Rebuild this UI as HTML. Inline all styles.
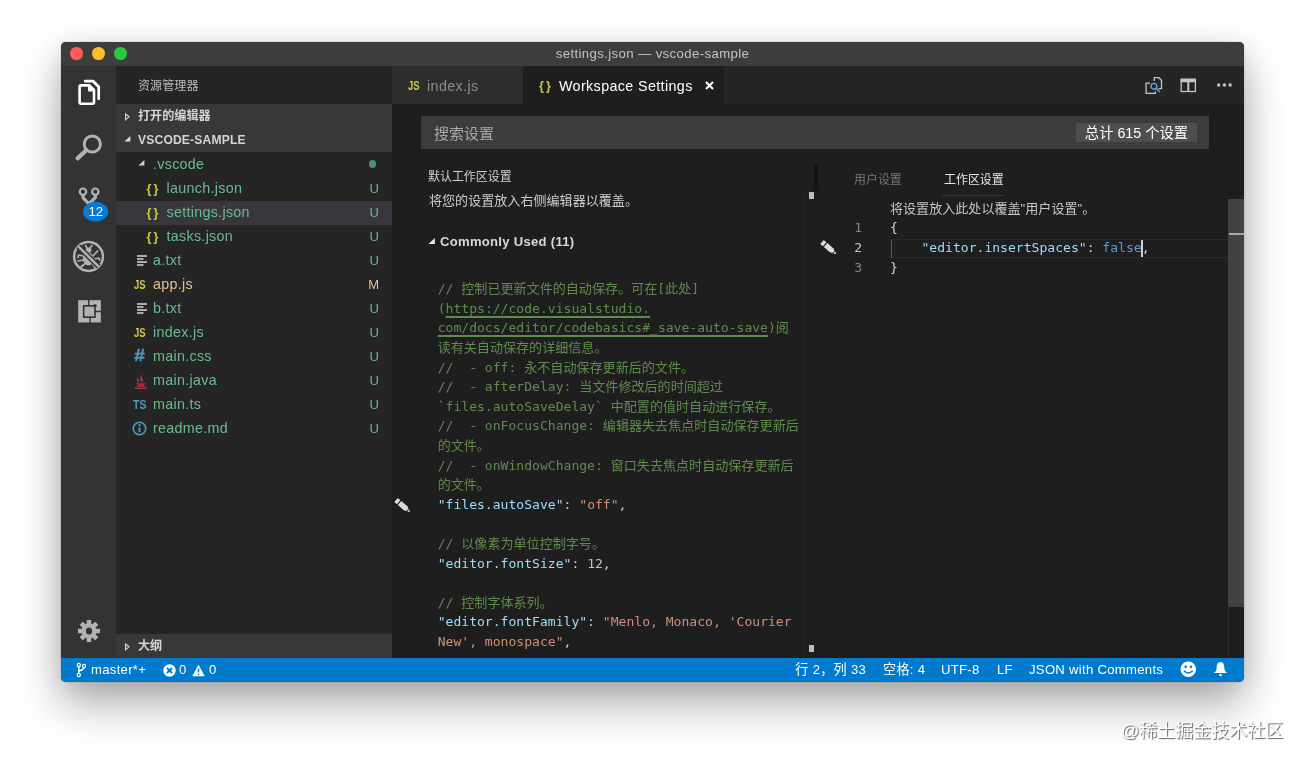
<!DOCTYPE html>
<html lang="zh-CN">
<head>
<meta charset="utf-8">
<title>settings.json — vscode-sample</title>
<style>
*{box-sizing:border-box;margin:0;padding:0}
html,body{width:1304px;height:762px;overflow:hidden;background:#fff}
body{position:relative;font-family:"Liberation Sans","Noto Sans CJK SC",sans-serif;font-size:14.3px;color:#ccc;-webkit-font-smoothing:antialiased}
.abs{position:absolute}
#win{position:absolute;left:61px;top:42px;width:1183px;height:640px;border-radius:5px;background:#1e1e1e;overflow:hidden;will-change:transform}
#shadow{position:absolute;left:61px;top:42px;width:1183px;height:640px;border-radius:5px;box-shadow:0 22px 44px rgba(0,0,0,.33),0 2px 26px rgba(0,0,0,.08),0 0 1px rgba(0,0,0,.5)}
#title{left:0;top:0;width:1183px;height:24px;background:#3d3d3d;text-align:center;line-height:24px;font-size:13.2px;color:#c4c4c4}
.tl{position:absolute;top:5px;width:12.8px;height:12.8px;border-radius:50%}
#act{left:0;top:24px;width:55px;height:592px;background:#333}
#side{left:55px;top:24px;width:276px;height:592px;background:#252526}
#status{left:0;top:615.6px;width:1183px;height:24.4px;background:#007acc;color:#fff;font-size:13.1px;line-height:24.4px}
#status .lt{letter-spacing:.3px}
#tabs{left:331px;top:24px;width:852px;height:37.8px;background:#252526}
.tab{position:absolute;top:0;height:37.8px;line-height:40px;font-size:14.3px}
.mono{font-family:"DejaVu Sans Mono","Liberation Mono","Noto Sans CJK SC",monospace;font-size:13.07px;line-height:19.61px;white-space:pre}
.row{position:absolute;left:0;width:276px;height:24px;line-height:23.2px;font-size:14.3px;white-space:nowrap}
.row .st{position:absolute;right:13px;top:0;font-size:13px}
.u{color:#6abb90}.m{color:#e2c08d}
.hdr{position:absolute;left:0;width:276px;height:24px;line-height:24px;background:#383838;font-weight:bold;font-size:12.1px;color:#d4d4d4}
.c{color:#608b4e}.k{color:#9cdcfe}.s{color:#ce9178}.n{color:#b5cea8}.b{color:#569cd6}.p{color:#d4d4d4}
.ico{position:absolute}
.lt{letter-spacing:.38px;white-space:nowrap}
.row .lt{letter-spacing:.3px}
.ln{height:19.61px}
.lk{text-decoration:underline;text-underline-offset:3.4px;text-decoration-thickness:1.6px}
.fi{position:absolute;top:0;line-height:24px}
.cd{font-weight:bold;font-size:12.2px;letter-spacing:0;display:inline-block;transform:scaleX(.78);transform-origin:0 50%}
</style>
</head>
<body>
<div id="shadow"></div>
<div id="win">
  <div id="title" class="abs lt">settings.json — vscode-sample
    <span class="tl" style="left:9px;background:#fc5b57"></span>
    <span class="tl" style="left:31px;background:#fdbc2e"></span>
    <span class="tl" style="left:53px;background:#28c840"></span>
  </div>
  <div id="act" class="abs">
    <!-- explorer -->
    <svg class="ico" style="left:14px;top:10px" width="30" height="34" viewBox="0 0 30 34">
      <path d="M10.2 5.2 H18.2 L23.7 10.7 V22.8" fill="none" stroke="#fff" stroke-width="2.7" stroke-linejoin="round" stroke-linecap="round"/>
      <path d="M18 4 L24.9 10.9 L22.4 11.2 L17.5 6.2 Z" fill="#fff"/>
      <path d="M6 9.4 H14.4 L19 14 V26.3 Q19 27.7 17.6 27.7 H6 Q4.6 27.7 4.6 26.3 V10.8 Q4.6 9.4 6 9.4 Z" fill="none" stroke="#fff" stroke-width="2.6" stroke-linejoin="round"/>
      <path d="M13.7 9.6 V14.8 H19" fill="#fff" stroke="#fff" stroke-width="1.2" stroke-linejoin="round"/>
    </svg>
    <!-- search -->
    <svg class="ico" style="left:10px;top:64px" width="36" height="36" viewBox="0 0 36 36">
      <circle cx="21.3" cy="14" r="8.1" fill="none" stroke="#b2b2b2" stroke-width="3"/>
      <path d="M15.2 20.3 L6.6 28.4" stroke="#b2b2b2" stroke-width="4.2" stroke-linecap="round"/>
    </svg>
    <!-- scm -->
    <svg class="ico" style="left:10px;top:112px" width="40" height="50" viewBox="0 0 40 50">
      <path d="M12 17 V19.6 L17.6 25.6 M24.3 17 V19.6 L18.8 25" fill="none" stroke="#b2b2b2" stroke-width="3.2" stroke-linejoin="round"/>
      <circle cx="12" cy="13.7" r="3.2" fill="#333" stroke="#b2b2b2" stroke-width="2.2"/>
      <circle cx="24.3" cy="13.7" r="3.2" fill="#333" stroke="#b2b2b2" stroke-width="2.2"/>
      <ellipse cx="24.6" cy="33.7" rx="12.6" ry="10" fill="#0a7ad0"/>
      <text x="24.8" y="38.4" text-anchor="middle" font-family="Liberation Sans, sans-serif" font-size="13.2" fill="#fff">12</text>
    </svg>
    <!-- debug -->
    <svg class="ico" style="left:9px;top:172px" width="38" height="38" viewBox="0 0 38 38">
      <circle cx="18.5" cy="18.5" r="14.4" fill="none" stroke="#b2b2b2" stroke-width="2.5"/>
      <ellipse cx="18.3" cy="21" rx="5.4" ry="6.4" fill="#b2b2b2"/>
      <ellipse cx="18.5" cy="12" rx="3" ry="2.6" fill="#b2b2b2"/>
      <path d="M13.5 18 L8.5 17 L8 19.5 M13 22 L8 23 M14.5 26 L11 29 M23.5 17.5 L27.5 13 M24 21 L29 20 L29.5 22 M22.5 26 L25 29.5 M17 10 L15.5 7.5 M20 10 L22 7.5" stroke="#b2b2b2" stroke-width="1.7" fill="none" stroke-linecap="round" stroke-linejoin="round"/>
      <path d="M8.3 8.3 L28.7 28.7" stroke="#333" stroke-width="5.4"/>
      <path d="M8.3 8.3 L28.7 28.7" stroke="#b2b2b2" stroke-width="2.5"/>
    </svg>
    <!-- extensions -->
    <svg class="ico" style="left:16.6px;top:234px" width="23.6" height="23.6" viewBox="0 0 25 25">
      <rect x="0.2" y="0.2" width="24" height="23.6" fill="#b4b4b4"/>
      <path d="M11.3 0 V7 M12.8 17.5 V24 M18 12.2 H24.5" stroke="#333" stroke-width="1.5" fill="none"/>
      <rect x="6" y="6.2" width="12" height="12" fill="#b0b0b0" stroke="#2a2a2a" stroke-width="1.6"/>
      <rect x="16.6" y="4.6" width="3" height="3.2" fill="#2a2a2a"/>
    </svg>
    <!-- gear -->
    <svg class="ico" style="left:15px;top:552px" width="26" height="26" viewBox="-13 -13 26 26">
      <g fill="#b2b2b2">
        <circle r="7.6"/>
        <g id="teeth">
          <rect x="-2.3" y="-11" width="4.6" height="22" rx="0.6"/>
          <rect x="-2.3" y="-11" width="4.6" height="22" rx="0.6" transform="rotate(45)"/>
          <rect x="-2.3" y="-11" width="4.6" height="22" rx="0.6" transform="rotate(90)"/>
          <rect x="-2.3" y="-11" width="4.6" height="22" rx="0.6" transform="rotate(135)"/>
        </g>
      </g>
      <ellipse rx="3.1" ry="3.5" fill="#333"/>
    </svg>
  </div>
  <div id="side" class="abs">
    <div class="abs" style="left:22px;top:1.3px;height:38.5px;line-height:38.5px;font-size:12.1px;color:#bbb">资源管理器</div>
    <div class="hdr" style="top:38px"><svg class="ico" style="left:8.5px;top:8.5px" width="6" height="8" viewBox="0 0 6 8"><path d="M0.6 0.8 L4 3.8 L0.6 6.8 Z" fill="none" stroke="#ddd" stroke-width="1.1"/></svg><span class="abs" style="left:22px">打开的编辑器</span></div>
    <div class="hdr" style="top:62px"><svg class="ico" style="left:8px;top:8px" width="7" height="6" viewBox="0 0 7 6"><path d="M6.4 0 V5.6 H0.4 Z" fill="#ddd"/></svg><span class="abs" style="left:22px;letter-spacing:.17px">VSCODE-SAMPLE</span></div>
    <div class="row" style="top:86.5px"><svg class="ico" style="left:22px;top:7.7px" width="7" height="6" viewBox="0 0 7 6"><path d="M6.4 0 V5.6 H0.4 Z" fill="#d0d0d0"/></svg><span class="abs lt u" style="left:37px">.vscode</span><span class="abs" style="left:252.8px;top:7.6px;width:7.6px;height:7.6px;border-radius:50%;background:#4f8f6e"></span></div>
    <div class="row" style="top:110.5px"><span class="fi" style="left:30.5px;color:#cbcb41;font-weight:bold;font-size:12.6px;letter-spacing:2.2px">{}</span><span class="abs lt u" style="left:50.5px">launch.json</span><span class="st u">U</span></div>
    <div class="row" style="top:134.5px;background:#37373d"><span class="fi" style="left:30.5px;color:#cbcb41;font-weight:bold;font-size:12.6px;letter-spacing:2.2px">{}</span><span class="abs lt u" style="left:50.5px">settings.json</span><span class="st u">U</span></div>
    <div class="row" style="top:158.5px"><span class="fi" style="left:30.5px;color:#cbcb41;font-weight:bold;font-size:12.6px;letter-spacing:2.2px">{}</span><span class="abs lt u" style="left:50.5px">tasks.json</span><span class="st u">U</span></div>
    <div class="row" style="top:182.5px"><svg class="ico" style="left:21px;top:6.5px" width="11" height="11" viewBox="0 0 11 11"><path d="M0 1 H10 M0 4 H6.5 M0 7 H10 M0 10 H6.5" stroke="#d4d7d6" stroke-width="1.5"/></svg><span class="abs lt u" style="left:37px">a.txt</span><span class="st u">U</span></div>
    <div class="row" style="top:206.5px"><span class="fi cd" style="left:17.5px;color:#cbcb41">JS</span><span class="abs lt m" style="left:37px">app.js</span><span class="st m">M</span></div>
    <div class="row" style="top:230.5px"><svg class="ico" style="left:21px;top:6.5px" width="11" height="11" viewBox="0 0 11 11"><path d="M0 1 H10 M0 4 H6.5 M0 7 H10 M0 10 H6.5" stroke="#d4d7d6" stroke-width="1.5"/></svg><span class="abs lt u" style="left:37px">b.txt</span><span class="st u">U</span></div>
    <div class="row" style="top:254.5px"><span class="fi cd" style="left:17.5px;color:#cbcb41">JS</span><span class="abs lt u" style="left:37px">index.js</span><span class="st u">U</span></div>
    <div class="row" style="top:278.5px"><span class="fi" style="left:18px;color:#519aba;font-weight:bold;font-style:italic;font-size:17px;top:-.3px;display:inline-block;transform:scaleX(1.12);transform-origin:0 50%;-webkit-text-stroke:.35px #519aba">#</span><span class="abs lt u" style="left:37px">main.css</span><span class="st u">U</span></div>
    <div class="row" style="top:302.5px"><svg class="ico" style="left:17.5px;top:3.5px" width="13.5" height="17" viewBox="0 0 13 17"><path d="M7.5 0.3 C10 3 4.5 5 6.3 7.8 C7 9 7.3 9.5 6.5 10.7 C9.8 8.7 9 7.3 7.9 6.3 C6.5 5 9.5 3.5 7.5 0.3 Z M5 2.5 C2.5 5 3.5 7 5 8.5 C5.2 9.5 5 10 4.6 10.6 C2 9 2 6 5 2.5 Z" fill="#b8363d"/><path d="M2 11.6 Q6.5 13 11 11.6 M2.8 13.7 Q6.5 14.8 10.2 13.7 M0.5 15.6 Q6.5 17.6 12.5 15.6" stroke="#b8363d" stroke-width="1.5" fill="none"/></svg><span class="abs lt u" style="left:37px">main.java</span><span class="st u">U</span></div>
    <div class="row" style="top:326.5px"><span class="fi cd" style="left:17px;color:#519aba;transform:scaleX(.86)">TS</span><span class="abs lt u" style="left:37px">main.ts</span><span class="st u">U</span></div>
    <div class="row" style="top:350.5px"><svg class="ico" style="left:16px;top:4.3px" width="15" height="15" viewBox="0 0 15 15"><circle cx="7.5" cy="7.5" r="6.2" fill="none" stroke="#519aba" stroke-width="1.6"/><path d="M7.5 6.4 V11.2" stroke="#519aba" stroke-width="2"/><circle cx="7.5" cy="4.1" r="1.2" fill="#519aba"/></svg><span class="abs lt u" style="left:37px">readme.md</span><span class="st u">U</span></div>
    <div class="hdr" style="top:568px"><svg class="ico" style="left:8.5px;top:8.5px" width="6" height="8" viewBox="0 0 6 8"><path d="M0.6 0.8 L4 3.8 L0.6 6.8 Z" fill="none" stroke="#ddd" stroke-width="1.1"/></svg><span class="abs" style="left:22px">大纲</span></div>
  </div>
  <div id="tabs" class="abs">
    <div class="tab" style="left:0;width:131px;background:#2d2d2d">
      <span class="abs cd" style="left:15.5px;color:#cbcb41">JS</span>
      <span class="abs lt" style="left:35px;color:#8e8e8e">index.js</span>
    </div>
    <div class="tab" style="left:131px;width:201px;background:#1e1e1e">
      <span class="abs lt" style="left:16px;color:#cbcb41;font-weight:bold;font-size:12.6px;letter-spacing:2.2px">{}</span>
      <span class="abs lt" style="left:36px;color:#fff">Workspace Settings</span>
      <svg class="ico" style="left:182px;top:15px" width="9" height="9" viewBox="0 0 9 9"><path d="M1 1 L8 8 M8 1 L1 8" stroke="#fff" stroke-width="2.1"/></svg>
    </div>
    <!-- editor actions -->
    <svg class="ico" style="left:753px;top:8.5px" width="19" height="20" viewBox="0 0 19 20">
      <path d="M9.3 6 V2.7 H14 L16.5 5.5 V13.7 H13.5 M5 8.2 H1.1 V18.3 H10.4 V16.5" fill="none" stroke="#c5c5c5" stroke-width="1.3"/>
      <circle cx="8.9" cy="11.3" r="2.9" fill="#252526" stroke="#5aa9e6" stroke-width="1.4"/>
      <path d="M11 13.4 L14.8 17" stroke="#5aa9e6" stroke-width="1.5"/>
    </svg>
    <svg class="ico" style="left:788.3px;top:12px" width="17" height="15" viewBox="0 0 17 15">
      <rect x="1.2" y="1.7" width="14.2" height="11.8" fill="none" stroke="#c5c5c5" stroke-width="1.3"/>
      <path d="M0.6 2.4 H16" stroke="#c5c5c5" stroke-width="3.6" fill="none"/><path d="M8.3 2 V13.5" stroke="#c5c5c5" stroke-width="2" fill="none"/>
    </svg>
    <svg class="ico" style="left:824px;top:16px" width="17" height="6" viewBox="0 0 17 6">
      <circle cx="2.7" cy="3" r="1.7" fill="#c5c5c5"/><circle cx="8.4" cy="3" r="1.7" fill="#c5c5c5"/><circle cx="14.1" cy="3" r="1.7" fill="#c5c5c5"/>
    </svg>
  </div>
  <div id="editor" class="abs" style="left:331px;top:62.5px;width:852px;height:553px">
    <!-- search box -->
    <div class="abs" style="left:29px;top:11.5px;width:788px;height:32.5px;background:#3c3c3c">
      <span class="abs" style="left:13px;top:1px;line-height:33px;font-size:15px;color:#a8a8a8">搜索设置</span>
      <span class="abs" style="left:655px;top:6.5px;width:121px;height:19.5px;background:#4e4e4e;color:#fff;line-height:20.5px;text-align:center;font-size:14.3px;white-space:nowrap">总计 615 个设置</span>
    </div>
    <!-- left pane -->
    <div class="abs" style="left:36px;top:62px;font-size:11.95px;line-height:20px;color:#d0d0d0">默认工作区设置</div>
    <div class="abs" style="left:37px;top:85.5px;font-size:13.07px;line-height:22px;color:#ccc">将您的设置放入右侧编辑器以覆盖。</div>
    <svg class="ico" style="left:36px;top:133.5px" width="7.5" height="6.5" viewBox="0 0 7 6"><path d="M6.4 0 V5.6 H0.4 Z" fill="#e8e8e8"/></svg>
    <div class="abs" style="left:48px;top:125.5px;font-size:13.07px;line-height:24px;font-weight:bold;letter-spacing:.29px;white-space:nowrap;color:#d8d8d8">Commonly Used (11)</div>
    <div class="abs mono" style="left:45.7px;top:174.6px"><div class="ln"><span class="c">// 控制已更新文件的自动保存。可在[此处]</span></div><div class="ln"><span class="c">(<span class="lk">https://code.visualstudio.</span></span></div><div class="ln"><span class="c"><span class="lk">com/docs/editor/codebasics#_save-auto-save</span>)阅</span></div><div class="ln"><span class="c">读有关自动保存的详细信息。</span></div><div class="ln"><span class="c">//  - off: 永不自动保存更新后的文件。</span></div><div class="ln"><span class="c">//  - afterDelay: 当文件修改后的时间超过</span></div><div class="ln"><span class="c">`files.autoSaveDelay` 中配置的值时自动进行保存。</span></div><div class="ln"><span class="c">//  - onFocusChange: 编辑器失去焦点时自动保存更新后</span></div><div class="ln"><span class="c">的文件。</span></div><div class="ln"><span class="c">//  - onWindowChange: 窗口失去焦点时自动保存更新后</span></div><div class="ln"><span class="c">的文件。</span></div><div class="ln"><span class="k">"files.autoSave"</span><span class="p">: </span><span class="s">"off"</span><span class="p">,</span></div><div class="ln">&nbsp;</div><div class="ln"><span class="c">// 以像素为单位控制字号。</span></div><div class="ln"><span class="k">"editor.fontSize"</span><span class="p">: </span><span class="n">12</span><span class="p">,</span></div><div class="ln">&nbsp;</div><div class="ln"><span class="c">// 控制字体系列。</span></div><div class="ln"><span class="k">"editor.fontFamily"</span><span class="p">: </span><span class="s">"Menlo, Monaco, 'Courier</span></div><div class="ln"><span class="s">New', monospace"</span><span class="p">,</span></div></div>
    <svg class="ico" style="left:3.7px;top:395.2px;overflow:visible" width="20" height="20" viewBox="0 0 20 20"><g transform="rotate(40.5)" fill="#dcdcdc"><rect x="0" y="-2.7" width="3.5" height="5.4" rx="0.7"/><path d="M4.7 -2.7 H12.6 L15.1 -1.5 V1.5 L12.6 2.7 H4.7 Z"/><path d="M16 -1.4 L18.6 0 L16 1.4 Z"/></g></svg>
    <!-- sash / borders -->
    <div class="abs" style="left:422px;top:59.5px;width:3.5px;height:27px;background:#141414"></div>
    <div class="abs" style="left:417px;top:87px;width:5px;height:7px;background:#bdbdbd"></div>
    <div class="abs" style="left:416.5px;top:540px;width:5px;height:7px;background:#bdbdbd"></div>
    <div class="abs" style="left:411px;top:85px;width:1px;height:468px;background:#282828"></div>
    <!-- right pane -->
    <div class="abs" style="left:462px;top:65.2px;font-size:11.95px;line-height:20px;color:#767676">用户设置</div>
    <div class="abs" style="left:552px;top:65.2px;font-size:11.95px;line-height:20px;color:#e7e7e7">工作区设置</div>
    <div class="abs" style="left:550px;top:90.3px;width:62px;height:1px;background:#3a3a3a"></div>
    <div class="abs" style="left:498px;top:94px;font-size:13.07px;line-height:20px;color:#c6c6c6;white-space:nowrap">将设置放入此处以覆盖"用户设置"。</div>
    <div class="abs" style="left:495px;top:134.5px;width:342px;height:18.5px;border-top:1px solid #2a2a2a;border-bottom:1px solid #2a2a2a"></div>
    <div class="abs" style="left:499px;top:135px;width:1px;height:18px;background:#5a5a5a"></div>
    <div class="abs mono" style="left:436px;top:113.9px;width:34px;text-align:right;color:#858585"><div class="ln">1</div><div class="ln" style="color:#c6c6c6">2</div><div class="ln">3</div></div>
    <div class="abs mono" style="left:498px;top:113.9px"><div class="ln"><span class="p">{</span></div><div class="ln">    <span class="k">"editor.insertSpaces"</span><span class="p">: </span><span class="b">false</span><span class="p">,</span></div><div class="ln"><span class="p">}</span></div></div>
    <div class="abs" style="left:749px;top:135.5px;width:2px;height:17px;background:#d0d0d0"></div>
    <svg class="ico" style="left:430px;top:137.9px;overflow:visible" width="20" height="20" viewBox="0 0 20 20"><g transform="rotate(40.5)" fill="#dcdcdc"><rect x="0" y="-2.7" width="3.5" height="5.4" rx="0.7"/><path d="M4.7 -2.7 H12.6 L15.1 -1.5 V1.5 L12.6 2.7 H4.7 Z"/><path d="M16 -1.4 L18.6 0 L16 1.4 Z"/></g></svg>
    <!-- scrollbar -->
    <div class="abs" style="left:836px;top:94.5px;width:16px;height:407.5px;background:#424242"></div>
    <div class="abs" style="left:837px;top:128px;width:15px;height:2px;background:#a8a8a8"></div>
    <div class="abs" style="left:836px;top:502px;width:1px;height:51px;background:#2c2c2c"></div>
  </div>
  <div id="status" class="abs">
    <svg class="ico" style="left:15px;top:4px" width="11" height="16" viewBox="0 0 11 16">
      <path d="M2.8 4.5 V11.5 M2.8 10 C2.8 8 8 8.5 8 5" fill="none" stroke="#fff" stroke-width="1.5"/>
      <circle cx="2.8" cy="3" r="1.6" fill="#007acc" stroke="#fff" stroke-width="1.2"/>
      <circle cx="2.8" cy="13" r="1.6" fill="#007acc" stroke="#fff" stroke-width="1.2"/>
      <circle cx="8" cy="4" r="1.6" fill="#007acc" stroke="#fff" stroke-width="1.2"/>
    </svg>
    <span class="abs lt" style="left:30px">master*+</span>
    <svg class="ico" style="left:102px;top:6px" width="13" height="13" viewBox="0 0 13 13"><circle cx="6.5" cy="6.5" r="6.2" fill="#fff"/><path d="M4 4 L9 9 M9 4 L4 9" stroke="#007acc" stroke-width="1.9"/></svg>
    <span class="abs lt" style="left:118px">0</span>
    <svg class="ico" style="left:131px;top:6px" width="13" height="13" viewBox="0 0 13 13"><path d="M6.5 0.5 L12.7 12.3 H0.3 Z" fill="#fff"/><path d="M6.5 4.5 V8.5 M6.5 9.7 V11.3" stroke="#007acc" stroke-width="1.5"/></svg>
    <span class="abs lt" style="left:148px">0</span>
    <span class="abs lt" style="left:734.3px">行 2，列 33</span>
    <span class="abs lt" style="left:822px">空格: 4</span>
    <span class="abs lt" style="left:880px">UTF-8</span>
    <span class="abs lt" style="left:936px">LF</span>
    <span class="abs lt" style="left:968px">JSON with Comments</span>
    <svg class="ico" style="left:1119px;top:3.4px" width="16.6" height="16.6" viewBox="0 0 17 17"><circle cx="8.5" cy="8.5" r="8" fill="#fff"/><circle cx="5.8" cy="6" r="1.3" fill="#007acc"/><circle cx="11.2" cy="6" r="1.3" fill="#007acc"/><path d="M4 10 Q8.5 14.5 13 10" fill="none" stroke="#007acc" stroke-width="1.5"/></svg>
    <svg class="ico" style="left:1151.5px;top:3.2px" width="15" height="16.4" viewBox="0 0 15 17"><path d="M7.5 1 C10.5 1 11.5 4 11.5 7 C11.5 10 13 11.5 14.5 12.5 H0.5 C2 11.5 3.5 10 3.5 7 C3.5 4 4.5 1 7.5 1 Z" fill="#fff"/><path d="M5.8 13.8 H9.2 Q9 15.8 7.5 15.8 Q6 15.8 5.8 13.8 Z" fill="#fff"/></svg>
  </div>
</div>
<div id="wm" class="abs" style="will-change:transform;left:1120.5px;top:718px;font-size:18px;line-height:26px;color:#fff;text-shadow:1px 1px 1px rgba(0,0,0,.62);white-space:nowrap">@稀土掘金技术社区</div>
</body>
</html>
